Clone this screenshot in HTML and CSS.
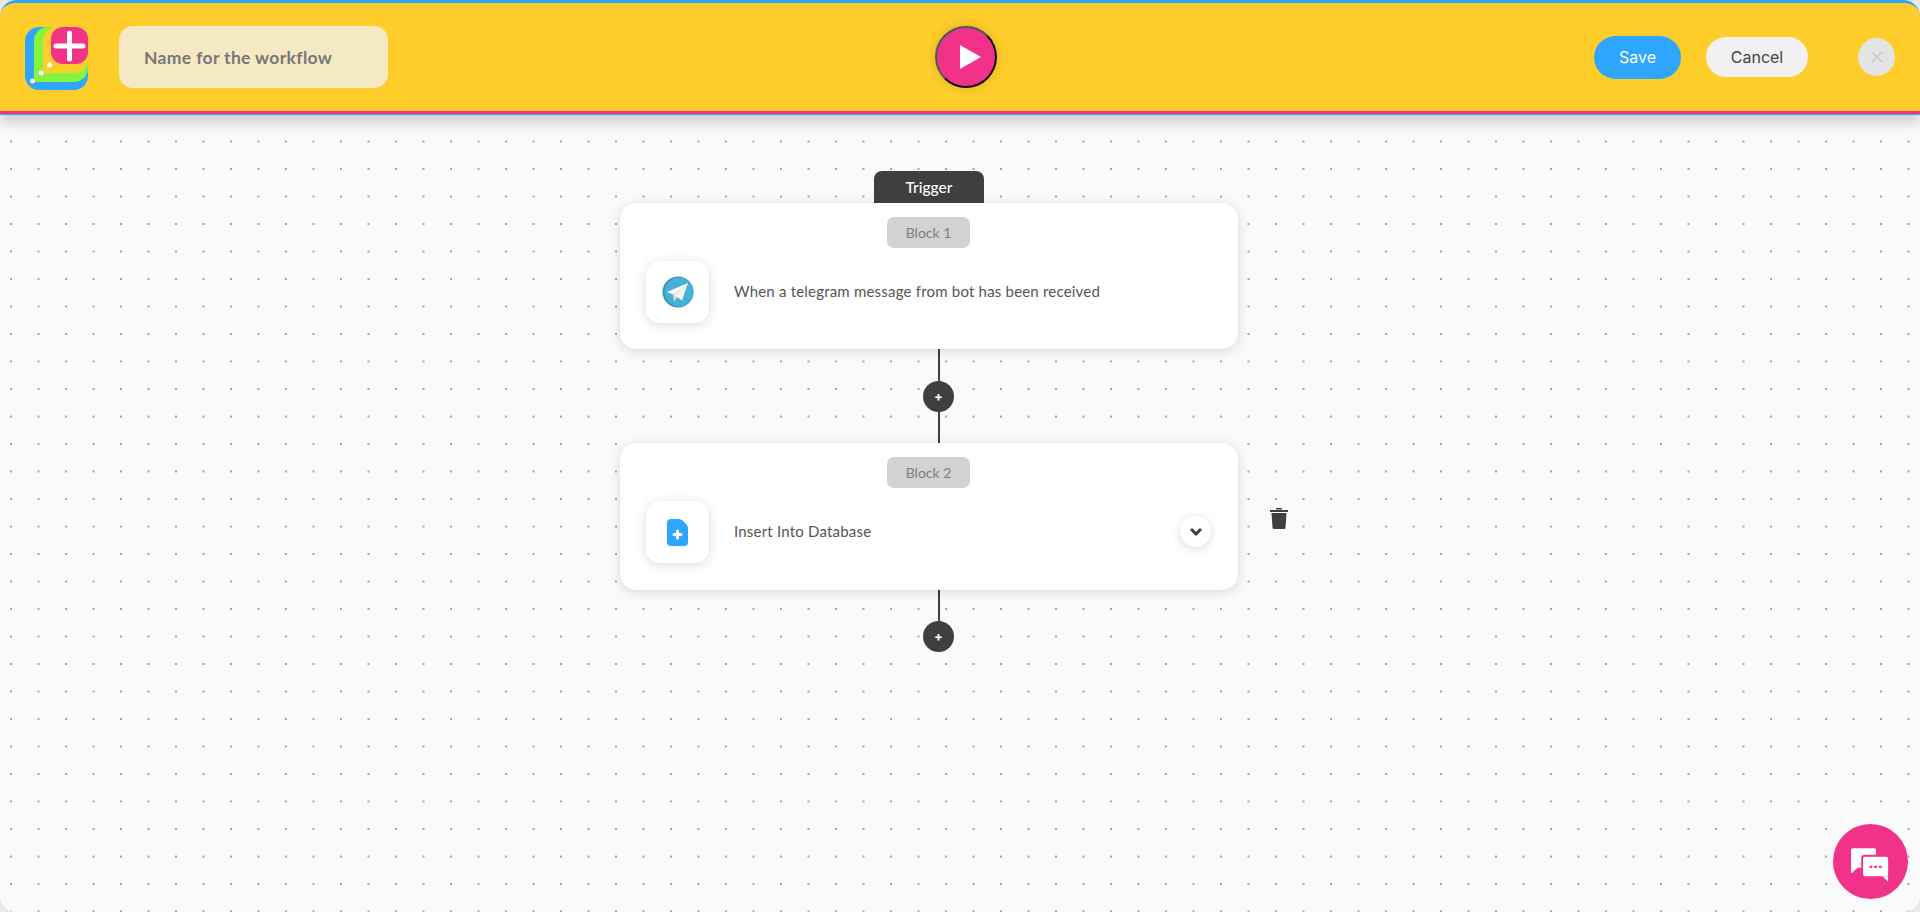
FILE: index.html
```html
<!DOCTYPE html>
<html lang="en">
<head>
    <meta charset="UTF-8">
    <title>New Workflow</title>
    <link rel="stylesheet" href="styles.css">
</head>
<body>
<div class="page">
    <header class="topbar">
        <svg class="logo" width="64" height="64" viewBox="0 0 64 64">
            <rect x="0" y="0" width="63" height="63" rx="14" fill="#2ea6ff"/>
            <path d="M9 14a14 14 0 0 1 14-14h40v41a14 14 0 0 1-14 14H9z" fill="#83f53d"/>
            <path d="M18 14a14 14 0 0 1 14-14h31v32a14 14 0 0 1-14 14H18z" fill="#fecd29"/>
            <rect x="26" y="0" width="37" height="37" rx="12" fill="#f13288"/>
            <path d="M44.500 6v26M31 19h27" stroke="#fff" stroke-width="5" stroke-linecap="round"/>
            <circle cx="7.500" cy="54" r="2.500" fill="#fff"/>
            <circle cx="16" cy="46" r="2.500" fill="#fff"/>
            <circle cx="24.500" cy="38" r="2.500" fill="#fff"/>
        </svg>
        <input class="name-input" type="text" placeholder="Name for the workflow">
        <button class="play-btn">
            <svg width="21" height="24" viewBox="0 0 21 24"><path d="M0 0l21 12L0 24z" fill="#fff"/></svg>
        </button>
        <div class="actions">
            <button class="btn btn-save">Save</button>
            <button class="btn btn-cancel">Cancel</button>
            <button class="btn-close">
                <svg width="14" height="14" viewBox="0 0 14 14"><path d="M2 2l10 10M12 2L2 12" stroke="#cfcfcf" stroke-width="2.200"/></svg>
            </button>
        </div>
    </header>

    <main class="canvas">
        <div class="flow">
            <div class="trigger-tab">Trigger</div>
            <section class="card">
                <div class="block-tag">Block 1</div>
                <div class="card-row">
                    <div class="icon-box">
                        <svg width="32" height="32" viewBox="0 0 32 32">
                            <circle cx="16" cy="16" r="15.500" fill="#3a93b8"/>
                            <circle cx="17" cy="16" r="14.500" fill="#46b1d7"/>
                            <path d="M5 16L26 7l-9 14z" fill="#fff"/>
                            <path d="M26 7L11 18.500l1 7.500 3-4.500z" fill="#d9d9d9"/>
                            <path d="M26 7L12 19l8 5.500z" fill="#f4f4f4"/>
                        </svg>
                    </div>
                    <div class="card-text">When a telegram message from bot has been received</div>
                </div>
            </section>
            <div class="line"></div>
            <button class="add-btn">+</button>
            <div class="line line-short"></div>
            <div class="card-wrap">
                <section class="card card-tall">
                    <div class="block-tag">Block 2</div>
                    <div class="card-row">
                        <div class="icon-box">
                            <svg width="21" height="27" viewBox="0 0 21 27">
                                <path d="M4 0h8q2 0 3.500 1.500l4 4Q21 7 21 9v14a4 4 0 0 1-4 4H4a4 4 0 0 1-4-4V4a4 4 0 0 1 4-4z" fill="#2ea6ff"/>
                                <path d="M10.500 12v7M7 15.500h7" stroke="#fff" stroke-width="3" stroke-linecap="round"/>
                            </svg>
                        </div>
                        <div class="card-text">Insert Into Database</div>
                        <button class="chevron-btn">
                            <svg width="14" height="10" viewBox="0 0 14 10"><path d="M2 2l5 5 5-5" fill="none" stroke="#3f3f3f" stroke-width="3"/></svg>
                        </button>
                    </div>
                </section>
                <svg class="trash" width="18" height="21" viewBox="0 0 18 21">
                    <path d="M6 1.500h6V0H6zM0 2h18v2H0zM1.500 5h15l-1 14.500a1.500 1.500 0 0 1-1.500 1.500H4a1.500 1.500 0 0 1-1.500-1.500z" fill="#3f3f3f"/>
                </svg>
            </div>
            <div class="line line-short"></div>
            <button class="add-btn">+</button>
        </div>
    </main>

    <button class="chat-btn">
        <svg width="39" height="34" viewBox="0 0 42 36">
            <path d="M2 0h23a2 2 0 0 1 2 2v17a2 2 0 0 1-2 2H7l-6 5.500H0V2a2 2 0 0 1 2-2z" fill="#fff"/>
            <rect x="12" y="8" width="29" height="23" rx="3" fill="#fff" stroke="#f13288" stroke-width="2"/>
            <path d="M34 30h6v6z" fill="#fff"/>
            <path d="M20 20h3M25 20h3M30 20h3" stroke="#f13288" stroke-width="2.500"/>
        </svg>
    </button>
</div>
</body>
</html>
```

FILE: styles.css
```css
html, body {
    margin: 0;
    height: 100%;
    background: #e9e9e9;
}
button {
    border: none;
    cursor: pointer;
    padding: 0;
}
.page {
    position: relative;
    height: 912px;
    overflow: hidden;
    border-radius: 16px;
    background-color: #fafafa;
    background-image: radial-gradient(circle, #8a8a8a 0.6px, transparent 1px);
    background-size: 27.5px 27.5px;
    background-position: -2.750px -9.750px;
    font-family: "Lato", "Noto Sans", sans-serif;
}

/* top bar */
.topbar {
    display: flex;
    align-items: center;
    height: 115px;
    box-sizing: border-box;
    padding: 0 25px;
    background: #fecd29;
    border-top: 3px solid #2ea6ff;
    border-bottom: 1px solid #2ea6ff;
    border-radius: 16px 16px 0 0;
    box-shadow: inset 0 -3px 0 #f13288, 0 7px 14px rgba(0, 0, 0, 0.2);
}
.logo {
    flex: none;
}
.name-input {
    width: 269px;
    height: 62px;
    box-sizing: border-box;
    margin-left: 30px;
    margin-top: -3px;
    padding: 0 25px;
    border: none;
    border-radius: 14px;
    background: #f5e9c4;
    font-family: inherit;
    font-size: 17.500px;
    font-weight: 700;
    letter-spacing: 0.35px;
    outline: none;
}
.name-input::placeholder {
    color: #777;
    opacity: 1;
}
.play-btn {
    display: flex;
    align-items: center;
    justify-content: center;
    width: 62px;
    height: 62px;
    box-sizing: border-box;
    margin-left: 547px;
    margin-top: -4px;
    padding-left: 8px;
    border-radius: 50%;
    background: #f13288;
    border: 2px solid #555;
    border-right-color: #111;
    border-bottom-color: #111;
    box-shadow: 0 0 10px rgba(0, 0, 0, 0.15);
}
.actions {
    display: flex;
    align-items: center;
    margin-left: auto;
    margin-top: -3px;
}
.btn {
    border-radius: 22px;
    font-family: "Inter", sans-serif;
    font-size: 16px;
}
.btn-save {
    width: 87px;
    height: 43px;
    background: #2ea6ff;
    color: #fff;
}
.btn-cancel {
    width: 102px;
    height: 40px;
    margin-left: 25px;
    background: #f1f1f1;
    color: #444;
}
.btn-close {
    display: flex;
    align-items: center;
    justify-content: center;
    width: 37px;
    height: 38px;
    margin-left: 50px;
    border-radius: 50%;
    background: #e4e4e4;
}

/* flow blocks */
.canvas {
    padding: 56px 0 0 620px;
}
.flow {
    display: flex;
    flex-direction: column;
    align-items: flex-start;
    width: 618px;
}
.trigger-tab {
    width: 110px;
    height: 32px;
    margin-left: 254px;
    border-radius: 8px 8px 0 0;
    background: #3f3f3f;
    color: #fff;
    font-size: 15.500px;
    font-weight: 500;
    line-height: 32px;
    text-align: center;
}
.card {
    width: 618px;
    height: 146px;
    box-sizing: border-box;
    padding-top: 14px;
    border-radius: 16px;
    background: #fff;
    box-shadow: 0 2px 12px rgba(0, 0, 0, 0.14);
}
.card-tall {
    height: 147px;
}
.card-wrap {
    display: flex;
    align-items: flex-start;
    position: relative;
}
.block-tag {
    width: 83px;
    height: 31px;
    margin-left: 267px;
    border-radius: 7px;
    background: #d2d2d2;
    color: #808080;
    font-size: 14px;
    line-height: 31px;
    text-align: center;
}
.card-row {
    display: flex;
    align-items: center;
    margin-top: 13px;
    padding: 0 26px;
}
.icon-box {
    display: flex;
    flex: none;
    align-items: center;
    justify-content: center;
    width: 63px;
    height: 62px;
    border-radius: 14px;
    background: #fff;
    box-shadow: 0 2px 12px rgba(0, 0, 0, 0.14);
}
.card-text {
    margin-left: 25px;
    margin-top: -2px;
    color: #555;
    font-size: 15px;
    letter-spacing: 0.2px;
}
.chevron-btn {
    display: flex;
    align-items: center;
    justify-content: center;
    width: 31px;
    height: 31px;
    margin-left: auto;
    margin-right: 1px;
    margin-top: -1px;
    border-radius: 50%;
    background: #fff;
    box-shadow: 0 2px 10px rgba(0, 0, 0, 0.15);
}
.trash {
    position: absolute;
    left: 650px;
    top: 65px;
}
.line {
    width: 2px;
    height: 32px;
    margin-left: 318px;
    background: #3f3f3f;
}
.line-short {
    height: 31px;
}
.add-btn {
    width: 31px;
    height: 31px;
    margin-left: 303px;
    border-radius: 50%;
    background: #3f3f3f;
    color: #fff;
    font-family: "Inter", sans-serif;
    font-size: 13px;
    font-weight: 700;
    line-height: 31px;
}

.chat-btn {
    position: absolute;
    right: 12px;
    bottom: 13px;
    display: flex;
    align-items: center;
    justify-content: center;
    width: 75px;
    height: 75px;
    padding-top: 7px;
    border-radius: 50%;
    background: #f13288;
}
```
